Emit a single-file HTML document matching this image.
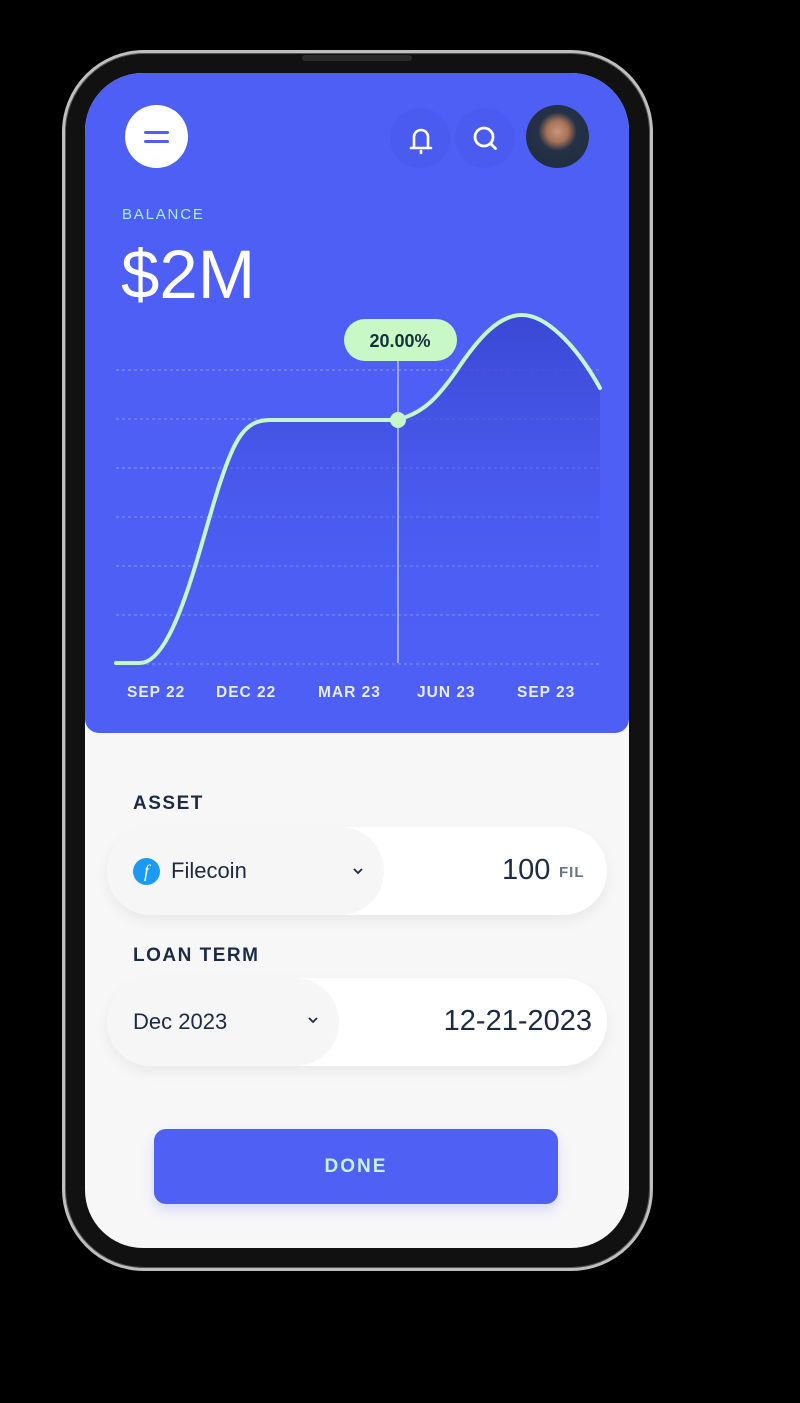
<!DOCTYPE html>
<html><head><meta charset="utf-8"><style>
*{margin:0;padding:0;box-sizing:border-box}
body{width:800px;height:1403px;background:#000;position:relative;overflow:hidden;font-family:"Liberation Sans",sans-serif}
.phone{position:absolute;left:62px;top:50px;width:591px;height:1221px;border-radius:82px;background:#111;border:3px solid #bfbfc2;box-shadow:0 0 0 1px #555 inset}
.screen{position:absolute;left:85px;top:73px;width:544px;height:1175px;border-radius:58px;background:#f7f7f8;overflow:hidden}
.blue{position:absolute;left:0;top:0;width:544px;height:660px;background:#4d5ff5;border-radius:0 0 14px 14px}
.abs{position:absolute}
.lbl{color:#1d2a44;font-weight:bold;font-size:19px;letter-spacing:1.5px}
.card{position:absolute;left:22px;width:500px;height:88px;border-radius:44px;background:#fff;box-shadow:0 6px 14px rgba(0,0,0,.06)}
.pill{position:absolute;left:0;top:0;height:88px;border-radius:44px;background:#f6f6f7}
</style></head><body>
<div class="phone"></div>
<div class="screen">
 <div class="blue">
  <div class="abs" style="left:40px;top:32px;width:63px;height:63px;border-radius:50%;background:#fff"></div>
  <div class="abs" style="left:59px;top:58px;width:25px;height:3px;background:#4d5ff5;border-radius:2px"></div>
  <div class="abs" style="left:59px;top:67px;width:25px;height:3px;background:#4d5ff5;border-radius:2px"></div>
  <div class="abs" style="left:305px;top:35px;width:60px;height:60px;border-radius:50%;background:#4a5bf0"></div>
  <div class="abs" style="left:370px;top:35px;width:60px;height:60px;border-radius:50%;background:#4a5bf0"></div>
  <svg class="abs" style="left:318px;top:48px" width="36" height="36" viewBox="0 0 36 36" fill="none" stroke="#fff" stroke-width="2.6" stroke-linecap="round"><path d="M8 27h20M11 27V16a7 7 0 0 1 14 0v11M18 30v2"/></svg>
  <svg class="abs" style="left:382px;top:48px" width="36" height="36" viewBox="0 0 36 36" fill="none" stroke="#fff" stroke-width="2.8" stroke-linecap="round"><circle cx="17" cy="16" r="9"/><path d="M23.5 22.5l5 5"/></svg>
  <div class="abs" style="left:441px;top:32px;width:63px;height:63px;border-radius:50%;background:radial-gradient(circle at 50% 42%,#c8957a 0,#a77358 22%,#243146 40%,#1f2c3f 100%)"></div>
  <div class="abs" style="left:37px;top:133px;color:#a9ecf5;font-size:15px;letter-spacing:1.8px">BALANCE</div>
  <div class="abs" style="left:36px;top:163px;color:#fff;font-size:69px;line-height:78px">$2M</div>
  <svg class="abs" style="left:0;top:0" width="544" height="660">
   <defs><linearGradient id="g" x1="0" y1="0" x2="0" y2="1"><stop offset="0" stop-color="#3a48d4"/><stop offset="1" stop-color="#4d5ff5" stop-opacity="0"/></linearGradient></defs>
   <g stroke="#8b98f8" stroke-width="1" stroke-dasharray="3 3"><path d="M31 297H515M31 346H515M31 395H515M31 444H515M31 493H515M31 542H515M31 591H515"/></g>
   <path d="M31 590H55C90 590 115 470 135 410C150 365 160 347 185 347H313C335 345 350 328 370 300C395 262 415 242 437 242C460 242 490 270 515 315V590Z" fill="url(#g)"/>
   <path d="M313 287V590" stroke="#b8c4fb" stroke-width="1.5"/>
   <path d="M31 590H55C90 590 115 470 135 410C150 365 160 347 185 347H306M321 344C340 337 352 325 370 300C395 262 415 242 437 242C460 242 490 270 515 315" fill="none" stroke="#c4f7cc" stroke-width="4" stroke-linecap="round"/>
   <circle cx="313" cy="347" r="8" fill="#c4f7cc"/>
   <rect x="259" y="246" width="113" height="42" rx="21" fill="#c9f8c7"/>
   <text x="315" y="274" text-anchor="middle" font-family="Liberation Sans" font-weight="bold" font-size="18" fill="#16313a">20.00%</text>
   <g font-family="Liberation Sans" font-weight="bold" font-size="15.5" fill="#e8ecff" letter-spacing="1">
    <text x="42" y="624">SEP 22</text><text x="131" y="624">DEC 22</text><text x="233" y="624">MAR 23</text><text x="332" y="624">JUN 23</text><text x="432" y="624">SEP 23</text>
   </g>
  </svg>
 </div>
 <div class="abs lbl" style="left:48px;top:720px">ASSET</div>
 <div class="card" style="top:754px">
  <div class="pill" style="width:277px"></div>
  <div class="abs" style="left:26px;top:31px;width:27px;height:27px;border-radius:50%;background:#1a9af0;color:#fff;font:italic 18px 'Liberation Serif',serif;text-align:center;line-height:27px">f</div>
  <div class="abs" style="left:64px;top:31px;font-size:22px;color:#1d2a44">Filecoin</div>
  <svg class="abs" style="left:245px;top:38px" width="12" height="12" viewBox="0 0 12 12"><path d="M2 4l4 4 4-4" fill="none" stroke="#1d2a44" stroke-width="1.8"/></svg>
  <div class="abs" style="left:395px;top:27px;font-size:29px;color:#1d2a44">100</div>
  <div class="abs" style="left:452px;top:37px;font-size:15px;font-weight:bold;color:#6b7280;letter-spacing:1px">FIL</div>
 </div>
 <div class="abs lbl" style="left:48px;top:872px">LOAN TERM</div>
 <div class="card" style="top:905px">
  <div class="pill" style="width:232px"></div>
  <div class="abs" style="left:26px;top:31px;font-size:22px;color:#1d2a44">Dec 2023</div>
  <svg class="abs" style="left:200px;top:36px" width="12" height="12" viewBox="0 0 12 12"><path d="M2 4l4 4 4-4" fill="none" stroke="#1d2a44" stroke-width="1.8"/></svg>
  <div class="abs" style="right:15px;top:27px;font-size:29px;color:#1d2a44">12-21-2023</div>
 </div>
 <div class="abs" style="left:69px;top:1056px;width:404px;height:75px;border-radius:12px;background:#4f60f5;box-shadow:0 6px 12px rgba(79,96,245,.2);color:#c6f3e9;font-size:19px;font-weight:bold;letter-spacing:2px;text-align:center;line-height:75px">DONE</div>
</div>
<div class="abs" style="left:302px;top:55px;width:110px;height:6px;border-radius:3px;background:#2a2a2a"></div>
</body></html>
